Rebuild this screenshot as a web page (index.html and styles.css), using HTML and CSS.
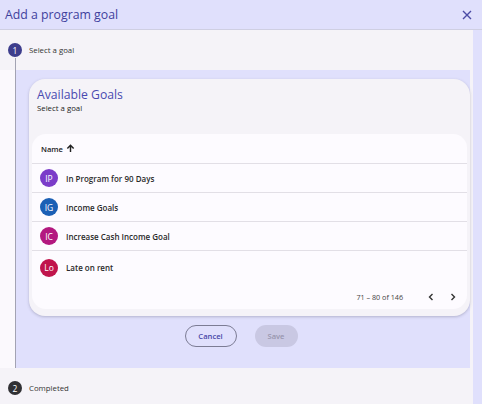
FILE: index.html
```html
<!DOCTYPE html>
<html>
<head>
<meta charset="utf-8">
<link rel="stylesheet" href="styles.css">
</head>
<body>
<div class="dialog">
  <header class="header">
    <h1 class="title">Add a program goal</h1>
    <button class="close" aria-label="Close">
      <svg width="10" height="10" viewBox="0 0 10 10"><path d="M1 1L9 9M9 1L1 9" stroke="#4b4ba6" stroke-width="1.4" fill="none"/></svg>
    </button>
  </header>
  <div class="scroll">
    <div class="step-head active">
      <span class="step-num">1</span>
      <span class="step-label">Select a goal</span>
    </div>
    <div class="step-body">
      <div class="rail"></div>
      <div class="content">
        <section class="card">
          <div class="card-head">
            <h2 class="card-title">Available Goals</h2>
            <p class="card-sub">Select a goal</p>
          </div>
          <div class="table">
            <div class="thead">Name <svg class="sort" width="9" height="9" viewBox="0 0 10 10"><path d="M5 9V1.5M1.5 5L5 1.5 8.5 5" stroke="#222" stroke-width="1.6" fill="none"/></svg></div>
            <div class="row"><span class="avatar ip">IP</span><span class="name">In Program for 90 Days</span></div>
            <div class="row"><span class="avatar ig">IG</span><span class="name">Income Goals</span></div>
            <div class="row"><span class="avatar ic">IC</span><span class="name">Increase Cash Income Goal</span></div>
            <div class="row last"><span class="avatar lo">Lo</span><span class="name">Late on rent</span></div>
            <div class="pager">
              <span class="range">71 – 80 of 146</span>
              <svg class="chev" width="8" height="8" viewBox="0 0 8 8"><path d="M5.5 1L2.5 4 5.5 7" stroke="#333" stroke-width="1.4" fill="none"/></svg>
              <svg class="chev" width="8" height="8" viewBox="0 0 8 8"><path d="M2.5 1L5.5 4 2.5 7" stroke="#333" stroke-width="1.4" fill="none"/></svg>
            </div>
          </div>
        </section>
        <div class="actions">
          <button class="btn cancel">Cancel</button>
          <button class="btn save" disabled>Save</button>
        </div>
      </div>
    </div>
    <div class="step-head done">
      <span class="step-num">2</span>
      <span class="step-label">Completed</span>
    </div>
  </div>
</div>
</body>
</html>
```
FILE: styles.css
```css
* { box-sizing: border-box; }
html, body { margin: 0; padding: 0; }
body {
  width: 482px;
  height: 404px;
  overflow: hidden;
  background: #e0e0fc;
  font-family: "Open Sans", "Noto Sans", sans-serif;
  color: #222;
}
.header {
  height: 30px;
  background: #e0e0fc;
  border-bottom: 1px solid #cfcfe2;
  display: flex;
  align-items: center;
  justify-content: space-between;
  padding: 0 9px 0 5px;
}
.title {
  margin: 0;
  font-size: 12.3px;
  font-weight: 400;
  color: #3f3f9c;
}
.close {
  border: 0;
  background: none;
  padding: 0;
  width: 12px;
  height: 12px;
  display: flex;
  align-items: center;
  justify-content: center;
}
.scroll {
  width: 473px;
  background: #f5f3f8;
}
.step-head {
  height: 40px;
  display: flex;
  align-items: center;
  gap: 7px;
  padding-left: 8px;
  position: relative;
}
.step-head.active::after {
  content: "";
  position: absolute;
  left: 15px;
  top: 28px;
  bottom: 0;
  width: 1px;
  background: #a3a3b3;
}
.step-num {
  width: 14px;
  height: 14px;
  border-radius: 50%;
  background: #3d3d8c;
  color: #fff;
  font-size: 8.5px;
  display: flex;
  align-items: center;
  justify-content: center;
}
.done .step-num { background: #303034; }
.step-label {
  font-size: 7.8px;
  color: #333;
}
.step-body {
  display: flex;
  margin-right: 3px;
}
.rail {
  width: 16px;
  background: #fbf9fd;
  border-right: 1px solid #a3a3b3;
}
.content {
  flex: 1;
  background: #e0e0fc;
  padding: 9px 0 21px 13px;
}
.card {
  width: 441px;
  height: 237px;
  background: #f5f3f8;
  border-radius: 16px;
  box-shadow: 0 1px 3px rgba(60, 60, 90, 0.28);
  padding: 0 3px;
  display: flex;
  flex-direction: column;
}
.card-head {
  height: 55px;
  padding: 7px 5px 0;
}
.card-title {
  margin: 0;
  font-size: 12.2px;
  font-weight: 400;
  color: #4a4ab0;
  line-height: 17px;
}
.card-sub {
  margin: 0;
  font-size: 7.8px;
  color: #222;
  line-height: 11px;
}
.table {
  flex: 1;
  background: #fdfbff;
  border-radius: 14px;
  margin-bottom: 7px;
  display: flex;
  flex-direction: column;
}
.thead {
  height: 30px;
  border-bottom: 1px solid #e2dfe6;
  display: flex;
  align-items: center;
  gap: 3px;
  padding-left: 9px;
  font-size: 7.6px;
  font-weight: 600;
  color: #222;
}
.row {
  height: 29px;
  border-bottom: 1px solid #e2dfe6;
  display: flex;
  align-items: center;
  gap: 8px;
  padding-left: 8px;
}
.row.last {
  height: 33px;
  border-bottom: 0;
}
.avatar {
  width: 18px;
  height: 18px;
  border-radius: 50%;
  color: #fff;
  font-size: 8.5px;
  display: flex;
  align-items: center;
  justify-content: center;
}
.ip { background: #7b3cc9; }
.ig { background: #1b60b5; }
.ic { background: #b3187f; }
.lo { background: #c0144c; }
.name {
  font-size: 8px;
  font-weight: 600;
  color: #2a2a2a;
}
.pager {
  flex: 1;
  display: flex;
  align-items: center;
  justify-content: flex-end;
  padding-right: 10px;
}
.range {
  font-size: 7.2px;
  color: #444;
  margin-right: 24px;
}
.chev { margin-left: 14px; }
.chev:first-of-type { margin-left: 0; }
.actions {
  display: flex;
  justify-content: center;
  gap: 18px;
  margin-top: 9px;
  padding-right: 17px;
}
.btn {
  height: 22px;
  border-radius: 11px;
  font-family: inherit;
  font-size: 7.6px;
  font-weight: 600;
  padding: 0;
}
.cancel {
  width: 52px;
  border: 1px solid #7c7c94;
  background: transparent;
  color: #4848a8;
}
.save {
  width: 43px;
  border: 0;
  background: #c9c8e3;
  color: #9896ae;
}
```
